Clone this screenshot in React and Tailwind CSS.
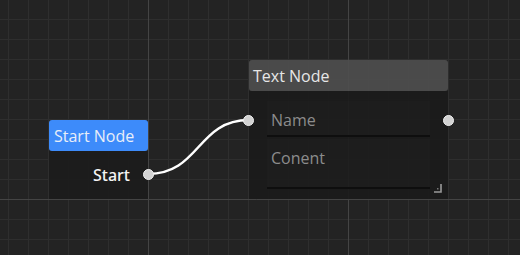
import React from "react";

function Grid() {
    return (
        <svg className="absolute inset-0" width="520" height="255">
            <defs>
                <pattern id="minor" x="8" y="19" width="20" height="20" patternUnits="userSpaceOnUse">
                    <path d="M0.5 0 V20 M0 0.5 H20" stroke="#2e2e2e" strokeWidth="1" fill="none" />
                </pattern>
            </defs>
            <rect width="520" height="255" fill="#232323" />
            <rect width="520" height="255" fill="url(#minor)" />
            <path d="M148.5 0 V255 M348.5 0 V255 M0 199.5 H520" stroke="#444" strokeWidth="1" />
        </svg>
    );
}

function Handle({ className }) {
    return <div className={"absolute h-[11px] w-[11px] rounded-full border border-[#f0f0f0] bg-[#d2d2d2] " + className} />;
}

export default function App() {
    return (
        <div className="relative h-[255px] w-[520px] overflow-hidden font-['Open_Sans',sans-serif] text-[16px]">
            <Grid />

            <svg className="absolute inset-0" width="520" height="255">
                <path d="M148 174 C 200 174, 197 120, 249 120" stroke="#fff" strokeWidth="2.5" fill="none" />
            </svg>

            {/* start node */}
            <div className="absolute left-[49px] top-[120px] flex w-[99px] flex-col">
                <div className="flex h-[31px] items-center rounded-[3px] bg-[#3d8bfa] px-[5px] text-[#e8eef8]">
                    Start Node
                </div>
                <div className="flex h-[48px] items-center justify-end bg-[#1c1c1c]/90 pr-[18px] font-['Noto_Sans',sans-serif] font-medium text-[#f4f4f4]">
                    Start
                </div>
                <Handle className="right-[-6px] top-[49px]" />
            </div>

            {/* text node */}
            <div className="absolute left-[249px] top-[60px] flex w-[199px] flex-col">
                <div className="flex h-[31px] items-center rounded-[3px] bg-[#4f4f4f]/90 px-[4px] text-[#e6e6e6]">
                    Text Node
                </div>
                <div className="flex h-[108px] flex-col gap-[2px] bg-[#1b1b1b]/90 px-[18px] pt-[10px]">
                    <div className="flex h-[36px] items-center border-b-2 border-[#0e0e0e] bg-white/[0.01] pl-[4px] pt-[4px] text-[#8c8c8c]">
                        Name
                    </div>
                    <div className="h-[50px] border-b-2 border-[#0e0e0e] bg-white/[0.01] pl-[4px] pt-[7px] text-[#8c8c8c]">
                        Conent
                    </div>
                </div>
                <Handle className="left-[-6px] top-[55px]" />
                <Handle className="right-[-6px] top-[55px]" />
                <svg className="absolute right-[6px] bottom-[6px]" width="8" height="9">
                    <path d="M7 0 V8 H0" stroke="#9a9a9a" strokeWidth="1.6" fill="none" />
                    <rect x="3" y="4" width="1.5" height="1.5" fill="#777" />
                </svg>
            </div>
        </div>
    );
}
